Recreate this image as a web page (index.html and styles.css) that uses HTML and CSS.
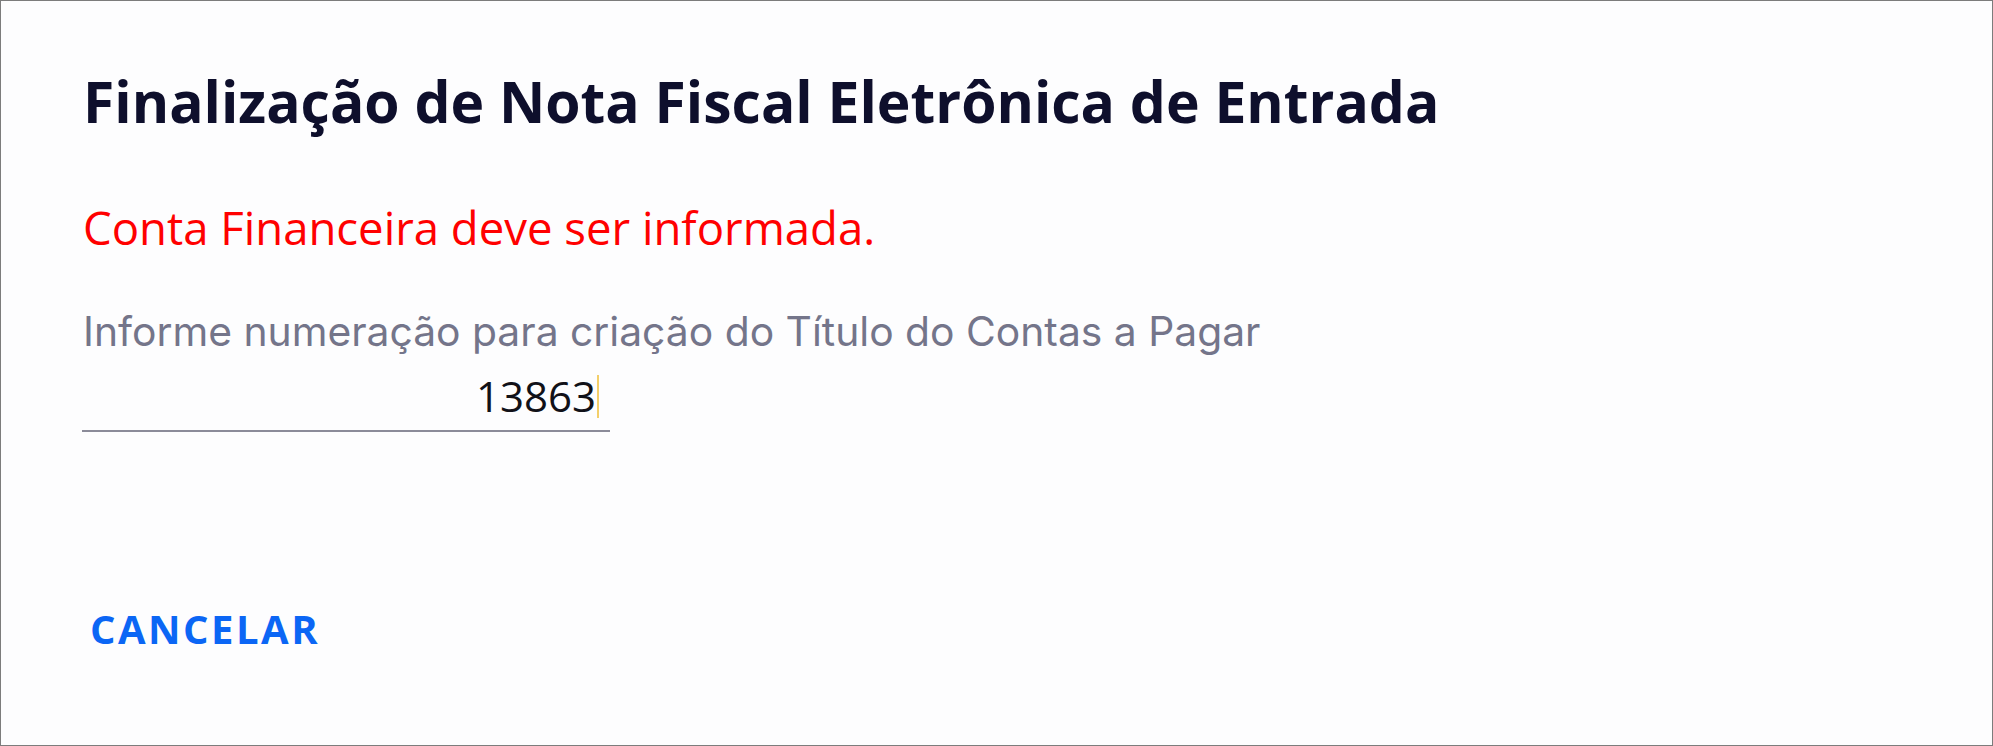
FILE: index.html
```html
<!DOCTYPE html>
<html lang="pt-BR">
<head>
<meta charset="utf-8">
<title>Finalização de Nota Fiscal Eletrônica de Entrada</title>
<link rel="stylesheet" href="styles.css">
</head>
<body>
<div class="dialog">
  <h1 class="dialog-title">Finalização de Nota Fiscal Eletrônica de Entrada</h1>
  <p class="dialog-error">Conta Financeira deve ser informada.</p>
  <label class="field-label">Informe numeração para criação do Título do Contas a Pagar</label>
  <div class="field">
    <span class="field-value">13863</span><span class="field-caret"></span>
  </div>
  <div class="dialog-actions">
    <button class="btn-text" type="button">CANCELAR</button>
  </div>
</div>
</body>
</html>
```

FILE: styles.css
```css
html, body {
  margin: 0;
  padding: 0;
  background: #fdfdfe;
}

.dialog {
  box-sizing: border-box;
  width: 1993px;
  height: 746px;
  border: 1px solid #7c7c7c;
  padding: 67px 0 0 82px;
  background: #fdfdfe;
  display: flex;
  flex-direction: column;
  align-items: flex-start;
}

.dialog-title {
  margin: 0;
  font-family: "Open Sans", "Liberation Sans", sans-serif;
  font-weight: 700;
  font-size: 57px;
  line-height: 67px;
  color: #0e0f2c;
}

.dialog-error {
  margin: 66px 0 0 0;
  font-family: "Open Sans", "Liberation Sans", sans-serif;
  font-weight: 400;
  font-size: 45.5px;
  line-height: 53px;
  color: #ff0000;
}

.field-label {
  display: block;
  margin-top: 53px;
  font-family: "Inter", "Lato", sans-serif;
  font-weight: 400;
  font-size: 40.8px;
  line-height: 49px;
  color: #74758a;
}

.field {
  box-sizing: border-box;
  margin-top: 15px;
  margin-left: -1px;
  width: 528px;
  display: flex;
  justify-content: flex-end;
  align-items: center;
  padding: 0 11px 9px 0;
  border-bottom: 2px solid #8b8b99;
}

.field-value {
  font-family: "Open Sans", "Liberation Sans", sans-serif;
  font-size: 42px;
  line-height: 50px;
  color: #111118;
}

.field-caret {
  width: 2px;
  height: 43px;
  margin-left: 1px;
  background: #f3cf6a;
}

.dialog-actions {
  margin-top: 165px;
}

.btn-text {
  border: none;
  background: transparent;
  padding: 8px 9px 8px 7px;
  margin: 0;
  font-family: "Open Sans", "Liberation Sans", sans-serif;
  font-weight: 700;
  font-size: 40px;
  line-height: 48px;
  letter-spacing: 2.5px;
  color: #0b66f5;
  cursor: pointer;
}
```
